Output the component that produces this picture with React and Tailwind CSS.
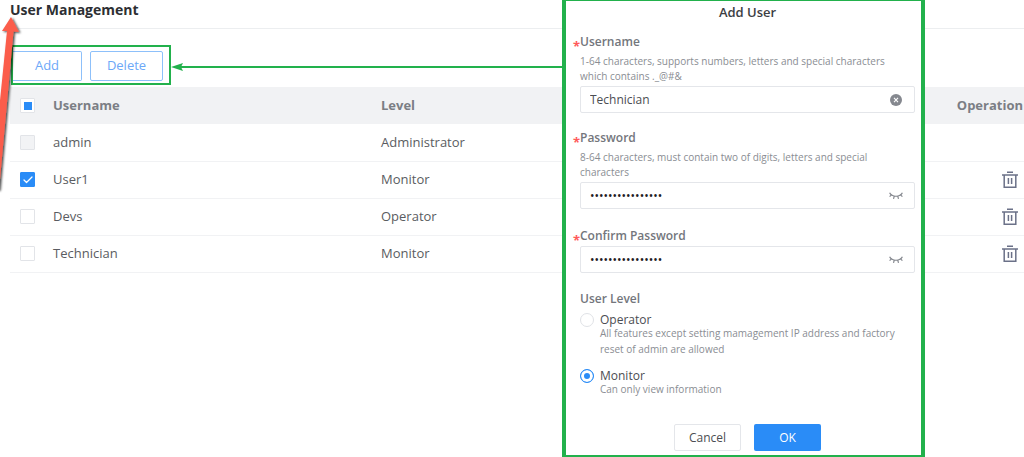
import React, { useState } from 'react';
import { Check } from 'lucide-react';

const initialUsers = [
  { name: 'admin', level: 'Administrator', locked: true },
  { name: 'User1', level: 'Monitor' },
  { name: 'Devs', level: 'Operator' },
  { name: 'Technician', level: 'Monitor' },
];

const TrashIcon = () => (
  <svg width="16" height="18" viewBox="0 0 16 18" fill="none" stroke="#6b7188" strokeWidth="1.5">
    <path d="M5 1.2h6M0 4h16M2.2 4v12.2h11.600V4M6.400 7v6M9.600 7v6" />
  </svg>
);

const ClosedEyeIcon = () => (
  <svg width="14" height="8" viewBox="0 0 14 8" fill="none" stroke="#85888f" strokeWidth="1.2">
    <path d="M.6 .8C3 5.4 11 5.400 13.400 .8M2.500 2.800L.6 4.700M5.200 4.300L4.500 6.800M8.800 4.300l.7 2.500M11.500 2.800l1.900 1.900" />
  </svg>
);

const ClearIcon = () => (
  <svg width="12" height="12" viewBox="0 0 12 12">
    <circle cx="6" cy="6" r="6" fill="#85888f" />
    <path d="M4 3.800l4 4.400M8 3.800L4 8.200" stroke="#fff" strokeWidth="1.100" />
  </svg>
);

const Checkbox = ({ label, partial, ...props }) => (
  <label className="grid w-[15px] h-[15px] place-items-center">
    <input
      type="checkbox"
      aria-label={label}
      className={`peer col-start-1 row-start-1 w-[15px] h-[15px] appearance-none rounded-[1px] border border-[#e2e4e8] bg-white disabled:bg-[#f2f3f5] ${
        partial ? '' : 'checked:border-[#2a8cf7] checked:bg-[#2a8cf7]'
      }`}
      {...props}
    />
    {partial ? (
      <span className="col-start-1 row-start-1 w-2 h-2 bg-[#2a8cf7] pointer-events-none" />
    ) : (
      <Check strokeWidth={2.5} className="col-start-1 row-start-1 w-3 h-3 text-white opacity-0 peer-checked:opacity-100 pointer-events-none" />
    )}
  </label>
);

const Field = ({ id, label, hint, type = 'text', value, onChange, icon, action, className }) => (
  <div className={className}>
    <div className="flex h-4 items-center">
      <span className="-ml-[7px] w-[7px] pt-2 text-[13px] leading-4 font-bold text-[#ff5a5a]">*</span>
      <label htmlFor={id} className="text-xs leading-4 font-semibold text-[#73767c]">{label}</label>
    </div>
    {hint && <p className="mt-1 pr-4 text-[10px] leading-[15px] text-[#8a8d93]">{hint}</p>}
    <div className="mt-0.5 flex h-[27px] items-center rounded-xs border border-[#e4e6ea] bg-white pl-[9px] pr-2.5">
      <input
        id={id}
        type={type}
        value={value}
        onChange={onChange}
        className={`min-w-0 flex-1 bg-transparent text-xs outline-none ${type === 'password' ? 'text-[#1f2023]' : 'text-[#4b4d52]'}`}
      />
      <button type="button" aria-label={action} className="flex w-4 justify-center">{icon}</button>
    </div>
  </div>
);

const LevelOption = ({ id, label, hint, checked, onChange, className }) => (
  <div className={`flex gap-1.5 ${className}`}>
    <input
      id={id}
      type="radio"
      name="level"
      checked={checked}
      onChange={onChange}
      className="mt-px w-3.5 h-3.5 shrink-0 appearance-none rounded-full border border-[#e0e2e6] bg-white checked:border-[#2a8cf7] checked:bg-[#2a8cf7] checked:shadow-[inset_0_0_0_3px_white]"
    />
    <div>
      <label htmlFor={id} className="block h-[13px] text-xs leading-4 text-[#4b4d52]">{label}</label>
      <p className="text-[10px] leading-4 text-[#8a8d93]">{hint}</p>
    </div>
  </div>
);

const AddUserDialog = () => {
  const [username, setUsername] = useState('Technician');
  const [password, setPassword] = useState('Technician123456');
  const [confirm, setConfirm] = useState('Technician123456');
  const [level, setLevel] = useState('monitor');

  return (
    <form
      role="dialog"
      aria-labelledby="dialog-title"
      className="absolute top-0 right-[99px] w-[363px] border-x-4 border-t border-b-2 border-[#22b14c] bg-white pt-px pr-1.5 pb-1 pl-3.5"
    >
      <h2 id="dialog-title" className="text-center text-[13px] leading-5 font-semibold text-[#3c3e43]">Add User</h2>
      <Field
        id="username"
        className="mt-3"
        label="Username"
        hint="1-64 characters, supports numbers, letters and special characters which contains ._@#&"
        value={username}
        onChange={(e) => setUsername(e.target.value)}
        icon={<ClearIcon />}
        action="Clear username"
      />
      <Field
        id="password"
        className="mt-[17px]"
        label="Password"
        hint="8-64 characters, must contain two of digits, letters and special characters"
        type="password"
        value={password}
        onChange={(e) => setPassword(e.target.value)}
        icon={<ClosedEyeIcon />}
        action="Show password"
      />
      <Field
        id="confirm"
        className="mt-[19px]"
        label="Confirm Password"
        type="password"
        value={confirm}
        onChange={(e) => setConfirm(e.target.value)}
        icon={<ClosedEyeIcon />}
        action="Show confirmation"
      />
      <fieldset className="mt-[18px]">
        <legend className="text-xs leading-4 font-semibold text-[#73767c]">User Level</legend>
        <LevelOption
          id="level-operator"
          className="mt-[5px]"
          label="Operator"
          hint="All features except setting mamagement IP address and factory reset of admin are allowed"
          checked={level === 'operator'}
          onChange={() => setLevel('operator')}
        />
        <LevelOption
          id="level-monitor"
          className="mt-[11px]"
          label="Monitor"
          hint="Can only view information"
          checked={level === 'monitor'}
          onChange={() => setLevel('monitor')}
        />
      </fieldset>
      <div className="mt-[27px] flex justify-center gap-[13px]">
        <button type="button" className="h-[27px] w-[67px] rounded-xs border border-[#e4e6ea] text-xs text-[#4b4d52]">Cancel</button>
        <button type="button" className="h-[27px] w-[67px] rounded-xs bg-[#2a8cf7] text-xs text-white">OK</button>
      </div>
    </form>
  );
};

const App = () => {
  const [selected, setSelected] = useState(['User1']);

  const toggle = (name) => {
    setSelected((prev) => (prev.includes(name) ? prev.filter((n) => n !== name) : [...prev, name]));
  };

  return (
    <div className="relative min-h-screen overflow-hidden bg-white font-['Open_Sans',sans-serif] text-[13px] text-[#5a5c61]">
      <main className="pl-2.5">
        <h1 className="h-[29px] border-b border-[#eceef0] text-sm leading-[19px] font-bold text-[#2d2f33]">User Management</h1>

        <div className="mt-4 flex">
          <div className="ml-px flex items-center gap-2 border-2 border-[#22b14c] pt-1 pr-1.5 pb-0.5">
            <button type="button" className="h-[30px] w-[69px] rounded-r-xs border border-l-0 border-[#8dc0fa] text-[#6ca8f8]">Add</button>
            <button type="button" className="h-[30px] w-[73px] rounded-xs border border-[#8dc0fa] text-[#6ca8f8]">Delete</button>
          </div>
        </div>

        <table className="mt-0.5 w-full table-fixed border-collapse text-left">
          <thead>
            <tr className="h-[37px] bg-[#f1f2f4] font-semibold text-[#7b7e84]">
              <th className="w-[43px] pl-2.5">
                <Checkbox label="Select all" partial />
              </th>
              <th className="w-[328px]">Username</th>
              <th>Level</th>
              <th className="w-24 pr-px text-right">Operation</th>
            </tr>
          </thead>
          <tbody>
            {initialUsers.map((user) => (
              <tr key={user.name} className="h-[37px] border-b border-[#f1f2f4]">
                <td className="pl-2.5">
                  <Checkbox
                    label={`Select ${user.name}`}
                    disabled={user.locked}
                    checked={selected.includes(user.name)}
                    onChange={() => toggle(user.name)}
                  />
                </td>
                <td>{user.name}</td>
                <td>{user.level}</td>
                <td className="pr-1.5">
                  {!user.locked && (
                    <button type="button" aria-label={`Delete ${user.name}`} className="ml-auto block">
                      <TrashIcon />
                    </button>
                  )}
                </td>
              </tr>
            ))}
          </tbody>
        </table>
      </main>

      {/* Callout arrows */}
      <div className="absolute top-[61px] right-[460px] left-[171px] flex items-center pointer-events-none">
        <svg width="14" height="12" viewBox="0 0 14 12" fill="#22b14c">
          <path d="M0 6L12 2L10 6L12 10Z" />
        </svg>
        <div className="-ml-1 h-0.5 flex-1 bg-[#22b14c]" />
      </div>
      <svg className="absolute top-3.5 left-0 pointer-events-none" width="26" height="190" viewBox="0 0 26 190">
        <defs>
          <filter id="arrow-shadow" x="-50%" y="-10%" width="200%" height="120%">
            <feDropShadow dx="1.5" dy="1" stdDeviation="1" floodColor="#000" floodOpacity="0.75" />
          </filter>
        </defs>
        <path d="M11 3L19 18L13.500 17.500L-1 176L-9 176L7 17L2 17Z" fill="#fb5d4c" filter="url(#arrow-shadow)" />
      </svg>

      <AddUserDialog />
    </div>
  );
};

export default App;
